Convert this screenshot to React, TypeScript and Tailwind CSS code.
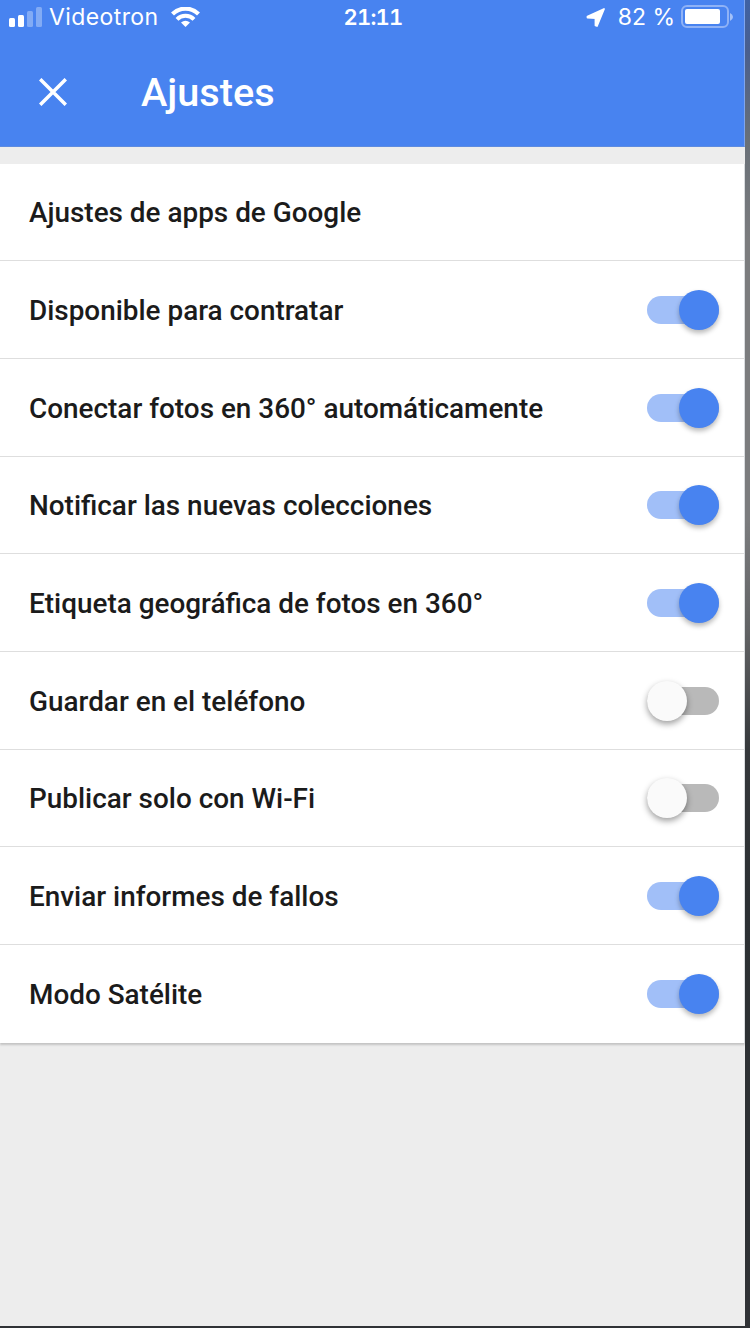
const settings = [
  { label: "Ajustes de apps de Google" },
  { label: "Disponible para contratar", on: true },
  { label: "Conectar fotos en 360° automáticamente", on: true },
  { label: "Notificar las nuevas colecciones", on: true },
  { label: "Etiqueta geográfica de fotos en 360°", on: true },
  { label: "Guardar en el teléfono", on: false },
  { label: "Publicar solo con Wi-Fi", on: false },
  { label: "Enviar informes de fallos", on: true },
  { label: "Modo Satélite", on: true },
];

function Toggle({ on }: { on: boolean }) {
  return (
    <button
      role="switch"
      aria-checked={on}
      className={`relative mt-[0.6px] h-7 w-18 rounded-full ${on ? "bg-[#a1bff8]" : "bg-[#b9b9b9]"}`}
    >
      <span
        className={`absolute -top-1.5 size-10 rounded-full ${
          on
            ? "right-0 bg-[#4883f0] shadow-[0_3px_5px_rgba(0,0,0,0.28)]"
            : "left-0 bg-[#fafafa] shadow-[0_3px_6px_rgba(0,0,0,0.38)]"
        }`}
      />
    </button>
  );
}

function StatusBar() {
  return (
    <div className="grid h-[34px] grid-cols-[1fr_auto_1fr] items-center pr-[10px] pl-[9px] font-['Inter',sans-serif] text-[23px] leading-none">
      <div className="flex items-center">
        <svg width="33" height="20" viewBox="0 0 33 20" fill="currentColor">
          <rect x="0" y="11" width="6" height="9" rx="1.5" />
          <rect x="9" y="8" width="6" height="12" rx="1.5" />
          <rect x="18" y="4" width="6" height="16" rx="1.5" opacity="0.32" />
          <rect x="27" y="0" width="6" height="20" rx="1.5" opacity="0.32" />
        </svg>
        <span className="ml-[7px] w-[110px] whitespace-nowrap tracking-[0.4px]">Videotron</span>
        <svg className="ml-3" width="29" height="21" viewBox="0 0 29 21" fill="none" stroke="currentColor">
          <path d="M1.5 7a18.400 18.400 0 0 1 26 0" strokeWidth="4.2" />
          <path d="M6 12.300a12 12 0 0 1 17 0" strokeWidth="4" />
          <path d="m10 15.500 4.500 4.500L19 15.500q-4.500-3.500-9 0Z" fill="currentColor" stroke="none" />
        </svg>
      </div>
      <span className="pl-[3px] text-[22px] font-semibold tabular-nums tracking-[-0.8px]">21:11</span>
      <div className="flex items-center justify-end">
        <svg className="mr-[13px]" width="19" height="19" viewBox="0 0 19 19" fill="currentColor">
          <path d="M18 1 11 18 9.500 17.500 9.500 10 1.500 9.500 1.500 8.500Z" stroke="currentColor" strokeWidth="1.8" strokeLinejoin="round" />
        </svg>
        <span className="mr-1.5 whitespace-nowrap">82 %</span>
        <svg width="53" height="24" viewBox="0 0 53 24">
          <rect x="1" y="1" width="46" height="21" rx="5" fill="none" stroke="#8fb2f6" strokeWidth="2" />
          <rect x="4" y="4" width="35" height="15" rx="2" fill="currentColor" />
          <path d="M49 8q3 1.500 3 4t-3 4Z" fill="#a4c1f8" />
        </svg>
      </div>
    </div>
  );
}

export default function App() {
  return (
    <div className="flex h-[1328px] w-[750px] overflow-hidden border-b-2 border-[#303236] bg-[#ededed] font-['Roboto',sans-serif]">
      <main className="w-[745px] shrink-0">
        <header className="h-[147px] border-r border-b border-r-[#7fa5ee] border-b-[#5d8be0] bg-[#4883f0] text-white">
          <StatusBar />
          <div className="flex h-[116px] items-center pl-[39px]">
            <button aria-label="Cerrar">
              <svg width="28" height="28" viewBox="0 0 28 28" fill="none" stroke="currentColor" strokeWidth="3.5">
                <path d="m1.200 1.200 25.600 25.600M26.800 1.200 1.200 26.800" />
              </svg>
            </button>
            <h1 className="ml-[74px] pt-px text-[39.7px] font-medium">Ajustes</h1>
          </div>
        </header>
        <ul className="mt-[16.6px] border-r border-[#d9dcdf] bg-white shadow-[0_2px_2px_rgba(0,0,0,0.18)]">
          {settings.map(({ label, on }) => (
            <li
              key={label}
              className="flex h-[97.7px] items-center justify-between border-b border-[#dedede] pr-[25px] pl-[29px] text-[27.9px] font-medium text-[#1b1b1b] last:border-b-0"
            >
              <span className="pt-[2.4px] whitespace-nowrap">{label}</span>
              {on !== undefined && <Toggle on={on} />}
            </li>
          ))}
        </ul>
      </main>
      <div className="flex-1 bg-[linear-gradient(#3f62a5_0px,#4a5f8e_50px,#697078_140px,#7b7c7e_240px,#7b7c7e_520px,#626365_630px,#35383b_750px,#2c3033_900px,#303236_1328px)]" />
    </div>
  );
}
